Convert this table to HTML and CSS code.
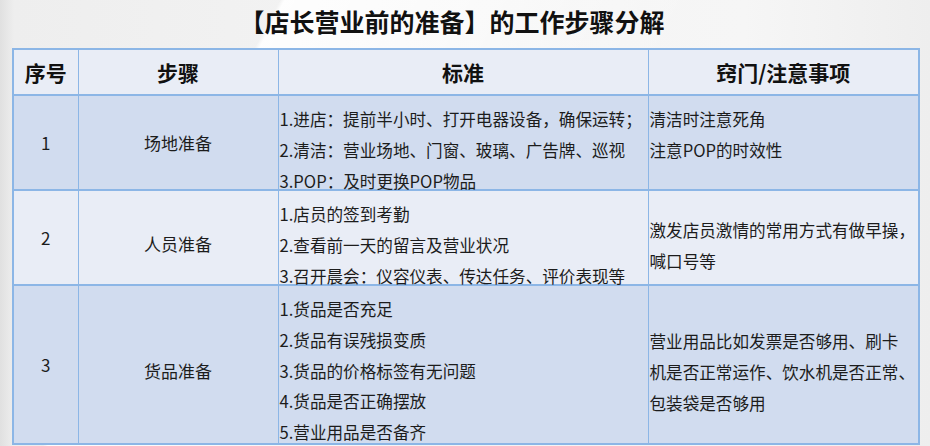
FILE: index.html
```html
<!DOCTYPE html>
<html lang="zh">
<head>
<meta charset="utf-8">
<title>店长营业前的准备</title>
<link rel="stylesheet" href="styles.css">
</head>
<body>
<div class="page">
  <h1 class="title">【店长营业前的准备】的工作步骤分解</h1>
  <table class="steps">
    <colgroup>
      <col class="c-no">
      <col class="c-step">
      <col class="c-std">
      <col class="c-tip">
    </colgroup>
    <thead>
      <tr class="head">
        <th><div class="cell h-head center">序号</div></th>
        <th><div class="cell h-head center">步骤</div></th>
        <th><div class="cell h-head center">标准</div></th>
        <th><div class="cell h-head center">窍门/注意事项</div></th>
      </tr>
    </thead>
    <tbody>
      <tr class="dark">
        <td><div class="cell h-r1 center num">1</div></td>
        <td><div class="cell h-r1 center lbl">场地准备</div></td>
        <td><div class="cell h-r1 top txt">
          <span>1.进店：提前半小时、打开电器设备，确保运转；</span>
          <span>2.清洁：营业场地、门窗、玻璃、广告牌、巡视</span>
          <span>3.POP：及时更换POP物品</span>
        </div></td>
        <td><div class="cell h-r1 top txt">
          <span>清洁时注意死角</span>
          <span>注意POP的时效性</span>
        </div></td>
      </tr>
      <tr class="light">
        <td><div class="cell h-r2 center num">2</div></td>
        <td><div class="cell h-r2 center lbl low">人员准备</div></td>
        <td><div class="cell h-r2 top txt">
          <span>1.店员的签到考勤</span>
          <span>2.查看前一天的留言及营业状况</span>
          <span>3.召开晨会：仪容仪表、传达任务、评价表现等</span>
        </div></td>
        <td><div class="cell h-r2 mid txt">
          <span>激发店员激情的常用方式有做早操，</span>
          <span>喊口号等</span>
        </div></td>
      </tr>
      <tr class="dark">
        <td><div class="cell h-r3 center num">3</div></td>
        <td><div class="cell h-r3 center lbl low">货品准备</div></td>
        <td><div class="cell h-r3 top txt tight">
          <span>1.货品是否充足</span>
          <span>2.货品有误残损变质</span>
          <span>3.货品的价格标签有无问题</span>
          <span>4.货品是否正确摆放</span>
          <span>5.营业用品是否备齐</span>
        </div></td>
        <td><div class="cell h-r3 mid txt">
          <span>营业用品比如发票是否够用、刷卡</span>
          <span>机是否正常运作、饮水机是否正常、</span>
          <span>包装袋是否够用</span>
        </div></td>
      </tr>
    </tbody>
  </table>
  <p class="note">注：以上各项准备工作须在营业前完成，店长负责逐项检查并记录。</p>
</div>
</body>
</html>
```

FILE: styles.css
```css
html, body {
  margin: 0;
  padding: 0;
}

body {
  width: 930px;
  height: 446px;
  overflow: hidden;
  font-family: "Noto Sans CJK SC", "Noto Sans", sans-serif;
  color: #1c1c1c;
  background:
    linear-gradient(118deg, rgba(255,255,255,0) 0%, rgba(255,255,255,0) 24%, rgba(255,255,255,0.9) 24.4%, rgba(255,255,255,0.6) 40%, rgba(255,255,255,0) 60%),
    linear-gradient(90deg, #e0e0e0 0px, #eeeeee 14px, #f3f3f3 40%, #f6f6f6 80%, #eeeeee 100%);
}

.page {
  display: flex;
  flex-direction: column;
}

.title {
  margin: 0;
  height: 48px;
  line-height: 42px;
  font-size: 25px;
  font-weight: 700;
  text-align: center;
  padding-right: 26px;
  color: #111;
}

.steps {
  margin-left: 12px;
  width: 906px;
  table-layout: fixed;
  border-collapse: collapse;
  border: 2px solid #8cb6e6;
}

.c-no { width: 65px; }
.c-step { width: 200px; }
.c-std { width: 370px; }
.c-tip { width: 271px; }

.steps th,
.steps td {
  border-left: 1px solid #8cb6e6;
  border-right: 1px solid #8cb6e6;
  border-top: 2px solid #8cb6e6;
  border-bottom: 2px solid #8cb6e6;
  padding: 0;
  vertical-align: top;
}

.head { background: #e9edf6; }
.dark { background: #d1dcef; }
.light { background: #e9edf6; }

.cell {
  display: flex;
  flex-direction: column;
  box-sizing: border-box;
  overflow: visible;
}

.h-head { height: 44px; }
.h-r1 { height: 93px; }
.h-r2 { height: 93px; }
.h-r3 { height: 157px; }

.center {
  align-items: center;
  justify-content: center;
  text-align: center;
}

.h-head {
  font-size: 21px;
  font-weight: 700;
  color: #111;
}

.num,
.lbl {
  font-size: 17px;
}

.lbl.low {
  padding-top: 12px;
}

.txt {
  font-size: 16.6px;
  line-height: 31px;
  white-space: nowrap;
  text-align: left;
  padding-left: 1px;
}

.top {
  justify-content: flex-start;
  padding-top: 8px;
}

.top.tight {
  line-height: 30.8px;
}

.mid {
  justify-content: center;
  padding-top: 16px;
}

.note {
  margin: 0;
  padding-left: 170px;
  height: 20px;
  line-height: 20px;
  font-size: 17px;
  color: #333;
  white-space: nowrap;
}
```
